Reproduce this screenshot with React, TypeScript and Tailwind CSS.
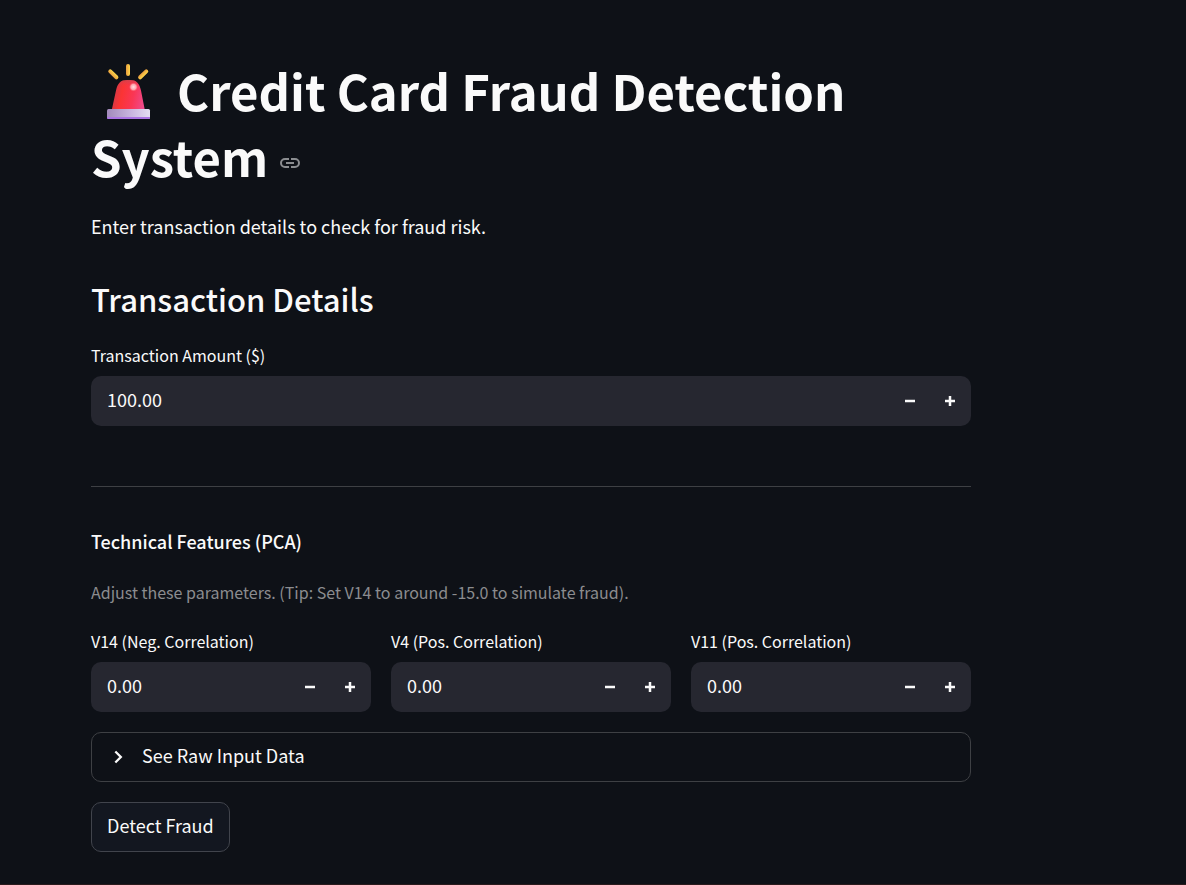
import { useState } from "react";

interface NumberFieldProps {
  id: string;
  label: string;
  initial: number;
}

function NumberField({ id, label, initial }: NumberFieldProps) {
  const [value, setValue] = useState(initial.toFixed(2));

  const step = (delta: number) => {
    setValue((prev) => ((parseFloat(prev) || 0) + delta).toFixed(2));
  };

  return (
    <div>
      <label htmlFor={id} className="block h-[41px] text-base leading-10">
        {label}
      </label>
      <div className="flex h-[50px] overflow-hidden rounded-[10px] bg-[#262730] p-px">
        <input
          id={id}
          type="text"
          inputMode="decimal"
          value={value}
          onChange={(e) => setValue(e.target.value)}
          className="min-w-0 flex-1 bg-transparent px-[15px] pb-1 text-lg outline-none"
        />
        <button
          type="button"
          aria-label={`Decrease ${label}`}
          onClick={() => step(-0.01)}
          className="flex w-10 items-center justify-center"
        >
          <svg viewBox="0 0 8 8" className="size-[10px]" fill="currentColor" aria-hidden="true">
            <path d="M0 3h8v2H0z" />
          </svg>
        </button>
        <button
          type="button"
          aria-label={`Increase ${label}`}
          onClick={() => step(0.01)}
          className="flex w-10 items-center justify-center"
        >
          <svg viewBox="0 0 8 8" className="size-[10px]" fill="currentColor" aria-hidden="true">
            <path d="M3 0h2v3h3v2H5v3H3V5H0V3h3z" />
          </svg>
        </button>
      </div>
    </div>
  );
}

function SirenIcon() {
  return (
    <svg
      viewBox="0 0 44 56"
      className="ml-4 mr-[15px] inline-block h-14 w-11 align-[-9px]"
      role="img"
      aria-label="Police car light"
    >
      <defs>
        <linearGradient id="dome" x1="0" x2="1" y1="0.4" y2="0.6">
          <stop offset="0" stopColor="#c93a4c" />
          <stop offset="0.3" stopColor="#fb3434" />
          <stop offset="0.65" stopColor="#fa3655" />
          <stop offset="1" stopColor="#ef4a8c" />
        </linearGradient>
        <linearGradient id="domeTop" x1="0" x2="0" y1="0" y2="1">
          <stop offset="0" stopColor="#b64a58" stopOpacity="0.6" />
          <stop offset="0.2" stopColor="#e83a50" stopOpacity="0" />
        </linearGradient>
        <linearGradient id="base" x1="0" x2="1" y1="0" y2="0">
          <stop offset="0" stopColor="#a28abb" />
          <stop offset="0.55" stopColor="#c9b5df" />
          <stop offset="1" stopColor="#e5def2" />
        </linearGradient>
        <linearGradient id="ray" x1="0" x2="1" y1="0" y2="0">
          <stop offset="0" stopColor="#e79b3e" />
          <stop offset="1" stopColor="#ffd84a" />
        </linearGradient>
        <radialGradient id="shine">
          <stop offset="0" stopColor="#ffdde0" />
          <stop offset="0.6" stopColor="#ffa3ad" />
          <stop offset="1" stopColor="#ff6479" stopOpacity="0" />
        </radialGradient>
      </defs>
      <rect x="19" y="0" width="4" height="12" rx="2" fill="url(#ray)" />
      <rect x="4.5" y="4" width="4" height="12.500" rx="2" fill="url(#ray)" transform="rotate(-46 6.5 10.5)" />
      <rect x="34" y="4" width="4" height="12.500" rx="2" fill="url(#ray)" transform="rotate(46 36 10.5)" />
      <path d="M9 26.500C10.500 19 14 16 20 16h3c6 0 9.500 3 11 10.500L38 47H4.500z" fill="url(#dome)" />
      <path d="M9 26.500C10.500 19 14 16 20 16h3c6 0 9.500 3 11 10.500L38 47H4.500z" fill="url(#domeTop)" />
      <circle cx="26.5" cy="23" r="4.500" fill="url(#shine)" />
      <rect x="0" y="45" width="43" height="10" rx="1.500" fill="url(#base)" />
      <path d="M0 53h43v.5a1.500 1.500 0 0 1-1.500 1.500h-40A1.500 1.500 0 0 1 0 53.500z" fill="#ac75e4" />
    </svg>
  );
}

export default function App() {
  return (
    <main className="min-h-screen border-b border-[#2a1a1c] bg-[#0e1117] pl-[91px] pr-6 pt-[57px] pb-8 font-['Noto_Sans_CJK_SC',sans-serif] text-[#fafafa]">
      <div className="max-w-[880px]">
        <h1 className="text-[49px] font-bold leading-[66px]">
          <SirenIcon />
          {" Credit Card Fraud Detection System"}
          <a
            href="#credit-card-fraud-detection-system"
            aria-label="Link to heading"
            className="ml-3 inline-block align-[9px] leading-none text-[#8b8d90]"
          >
            <svg viewBox="0 0 20 10" className="h-[10px] w-5" fill="none" stroke="currentColor" strokeWidth="2" aria-hidden="true">
              <path d="M9 1H5a4 4 0 0 0 0 8h4M11 1h4a4 4 0 0 1 0 8h-4M6 5h8" />
            </svg>
          </a>
        </h1>

        <p className="mt-[21px] text-lg leading-8">Enter transaction details to check for fraud risk.</p>

        <h2 className="mt-[37px] mb-4 text-[31px] font-medium leading-10">Transaction Details</h2>

        <NumberField id="amount" label="Transaction Amount ($)" initial={100} />

        <hr className="mt-[60px] mb-[38px] border-[#3e4044]" />

        <h3 className="text-lg font-medium leading-8">Technical Features (PCA)</h3>
        <p className="mt-[19px] mb-[13px] text-base leading-8 text-[#8b8c8f]">
          Adjust these parameters. (Tip: Set V14 to around -15.0 to simulate fraud).
        </p>

        <div className="grid grid-cols-3 gap-5">
          <NumberField id="v14" label="V14 (Neg. Correlation)" initial={0} />
          <NumberField id="v4" label="V4 (Pos. Correlation)" initial={0} />
          <NumberField id="v11" label="V11 (Pos. Correlation)" initial={0} />
        </div>

        <details className="mt-5 rounded-[10px] border border-[#3e4044]">
          <summary className="flex h-12 cursor-pointer list-none items-center gap-3 px-4 text-lg">
            <svg viewBox="0 0 24 24" className="size-[22px]" fill="none" stroke="currentColor" strokeWidth="2.500" aria-hidden="true">
              <path d="M8 6l6 6-6 6" />
            </svg>
            <span className="pb-1">See Raw Input Data</span>
          </summary>
        </details>

        <button
          type="button"
          className="mt-5 h-[50px] rounded-[10px] border border-[#41444c] bg-[#131720] px-[15px] pb-1 text-lg"
        >
          Detect Fraud
        </button>
      </div>
    </main>
  );
}
